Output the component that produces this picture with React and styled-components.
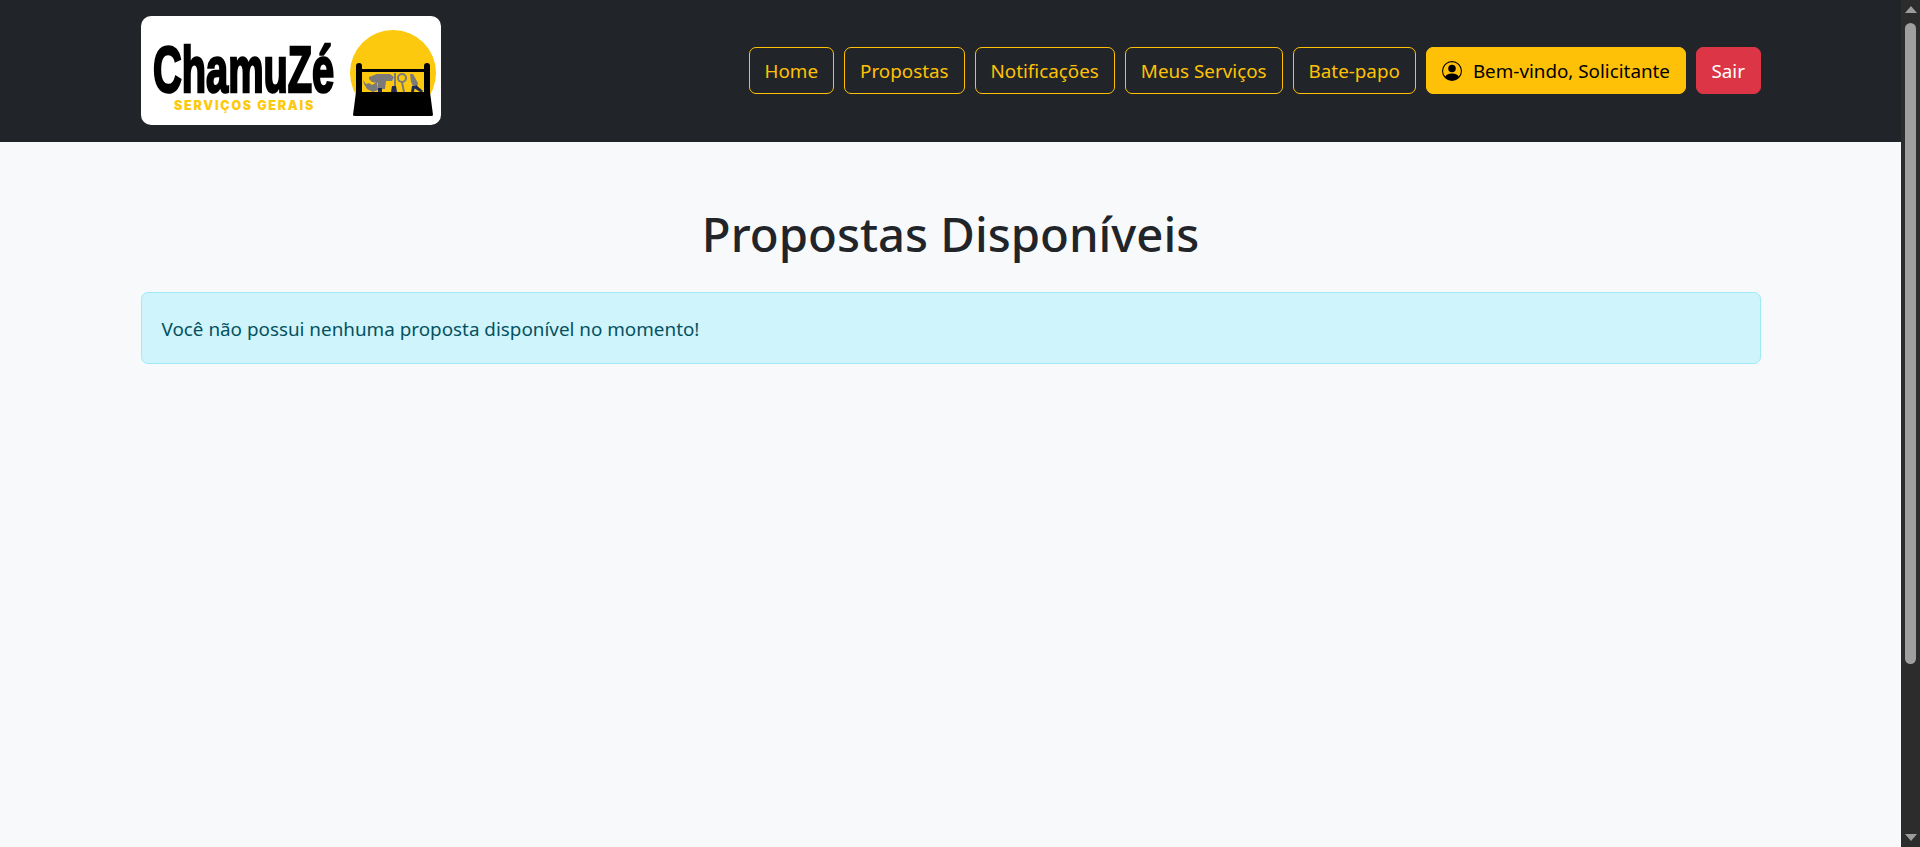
import styled, { createGlobalStyle } from "styled-components";
import { BsPersonCircle } from "react-icons/bs";

const GlobalStyle = createGlobalStyle`
  html, body {
    margin: 0;
    height: 100%;
    overflow: hidden;
  }
  body {
    background: #f8f9fa;
    color: #212529;
    font-family: "Noto Sans", "Open Sans", sans-serif;
  }
  * {
    box-sizing: border-box;
  }
`;

const Shell = styled.div`
  display: flex;
  height: 100vh;
`;

const Page = styled.div`
  flex: 1;
  min-width: 0;
`;

const Header = styled.header`
  background: #212529;
  height: 142px;
  padding-bottom: 1px;
  display: flex;
  align-items: center;
`;

const Container = styled.div`
  width: 1620px;
  margin: 0 auto;
`;

const HeaderRow = styled(Container)`
  display: flex;
  align-items: center;
  justify-content: space-between;
`;

const LogoCard = styled.a`
  display: flex;
  width: 300px;
  height: 109px;
  background: #fff;
  border-radius: 10px;
  overflow: hidden;
  padding: 23px 0 0 12px;
`;

const LogoText = styled.div`
  flex: none;
  width: 180px;
  display: flex;
  flex-direction: column;
  align-items: center;
`;

const Wordmark = styled.div`
  width: 180px;
  height: 60px;
  font-family: "Liberation Sans", Arial, sans-serif;
  font-weight: 700;
  font-size: 65px;
  line-height: 62px;
  color: #000;
  white-space: nowrap;
  -webkit-text-stroke: 2.6px #000;
  transform: scaleX(0.612);
  transform-origin: left center;
`;

const Tagline = styled.div`
  font-family: Inter, "Liberation Sans", sans-serif;
  font-weight: 900;
  font-size: 12.5px;
  line-height: 14px;
  letter-spacing: 1.75px;
  color: #fcc90f;
  white-space: nowrap;
  margin-left: 4px;
`;

const ToolboxArt = styled.svg`
  flex: none;
  width: 90px;
  height: 100px;
  margin: -19px 0 0 15px;
`;

const Nav = styled.nav`
  display: flex;
  align-items: center;
  gap: 10px;
`;

const NavButton = styled.a`
  display: flex;
  align-items: center;
  justify-content: center;
  gap: 11px;
  height: 47px;
  padding: 0 ${(p) => (p.$variant === "danger" ? "14.5px" : "15px")};
  border: 1px solid #ffc107;
  border-radius: 7px;
  font-size: 18.82px;
  white-space: nowrap;
  color: ${(p) => (p.$variant === "solid" ? "#000" : p.$variant === "danger" ? "#fff" : "#ffc107")};
  background: ${(p) => (p.$variant === "solid" ? "#ffc107" : p.$variant === "danger" ? "#dc3545" : "transparent")};
  border-color: ${(p) => (p.$variant === "danger" ? "#dc3545" : "#ffc107")};
`;

const Main = styled(Container)`
  padding-top: 53px;
`;

const Title = styled.h1`
  margin: 0 0 19px;
  height: 78px;
  font-size: 47.3px;
  line-height: 78px;
  font-weight: 500;
  text-align: center;
  color: #212529;
`;

const Alert = styled.div`
  height: 72px;
  display: flex;
  align-items: center;
  padding: 1px 20px 0;
  background: #cff4fc;
  border: 1px solid #9eeaf9;
  border-radius: 7px;
  color: #055160;
  font-size: 18.85px;
`;

const Scrollbar = styled.aside`
  flex: none;
  width: 19px;
  background: #2c2c2c;
  display: flex;
  flex-direction: column;
  align-items: center;
`;

const Arrow = styled.span`
  flex: none;
  width: 0;
  height: 0;
  margin: 6px 0;
  border-left: 6px solid transparent;
  border-right: 6px solid transparent;
  border-${(p) => (p.$down ? "top" : "bottom")}: 7px solid #9b9b9b;
`;

const Track = styled.div`
  flex: 1;
`;

const Thumb = styled.div`
  width: 11px;
  height: 641px;
  margin-top: 4px;
  background: #9f9f9f;
  border-radius: 6px;
`;

const navItems = ["Home", "Propostas", "Notificações", "Meus Serviços", "Bate-papo"];

function Toolbox() {
  return (
    <ToolboxArt viewBox="8 0 90 100" aria-hidden="true">
      <circle cx="53" cy="53" r="43" fill="#fcc90f" />
      {/* ferramentas */}
      <path d="M23 60l3 4 3-1 3 2 5-3 1 8-5 2-6-3-3-5z" fill="#7a7a7a" />
      <path d="M29 57l8-3 13 0 4 3-2 4-6 0-1 8-7 0 0-6-6-1-3-3z" fill="#7a7a7a" />
      <path d="M38 68h4v4h-4z" fill="#1c2a55" />
      <path d="M54 53h2v14h-2z" fill="#7a7a7a" />
      <path d="M52 66h4l1 6h-6z" fill="#1c2a55" />
      <circle cx="62" cy="58" r="4" fill="none" stroke="#7a7a7a" strokeWidth="2" />
      <path d="M61 62h2l2 10h-2z" fill="#7a7a7a" />
      <path d="M70 54l3 0 5 9-1 5-3 0-3-6z" fill="#7a7a7a" />
      <path d="M72 66l3 0-1 6-3 0zM76 65l7 6-1 1h-2l-6-4z" fill="#1c2a55" />
      {/* caixa */}
      <path d="M16 72h74l3 23q0 1-2 1H15q-2 0-2-1z" fill="#000" />
      <path d="M16 46q0-3 3-3t3 3v27h-6z" fill="#000" />
      <path d="M84 46q0-3 3-3t3 3v27h-6z" fill="#000" />
      <path d="M20 49h65v3H20z" fill="#000" />
    </ToolboxArt>
  );
}

export default function App() {
  return (
    <Shell>
      <GlobalStyle />
      <Page>
        <Header>
          <HeaderRow>
            <LogoCard>
              <LogoText>
                <Wordmark>ChamuZé</Wordmark>
                <Tagline>SERVIÇOS GERAIS</Tagline>
              </LogoText>
              <Toolbox />
            </LogoCard>
            <Nav>
              {navItems.map((item) => (
                <NavButton key={item}>{item}</NavButton>
              ))}
              <NavButton $variant="solid">
                <BsPersonCircle size={20} />
                Bem-vindo, Solicitante
              </NavButton>
              <NavButton $variant="danger">Sair</NavButton>
            </Nav>
          </HeaderRow>
        </Header>
        <Main>
          <Title>Propostas Disponíveis</Title>
          <Alert>Você não possui nenhuma proposta disponível no momento!</Alert>
        </Main>
      </Page>
      <Scrollbar>
        <Arrow />
        <Thumb />
        <Track />
        <Arrow $down />
      </Scrollbar>
    </Shell>
  );
}
